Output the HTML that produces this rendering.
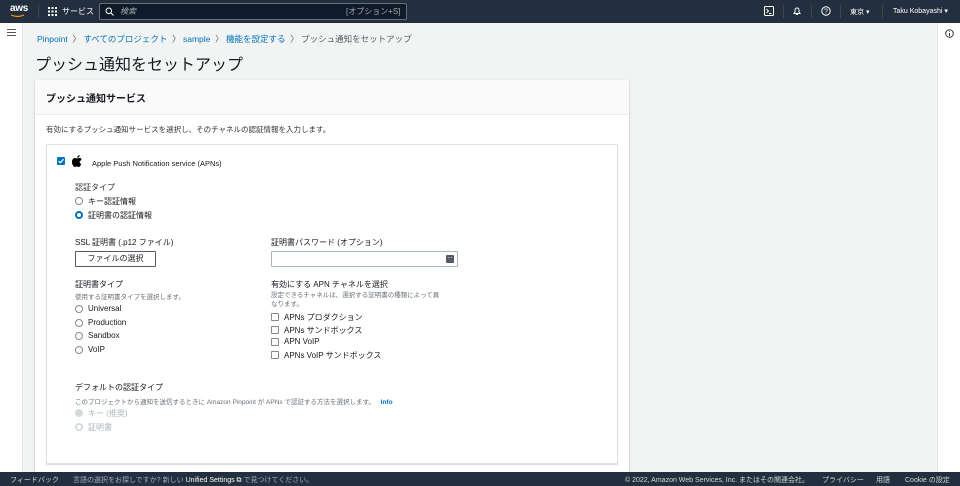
<!DOCTYPE html>
<html><head><meta charset="utf-8"><style>
*{box-sizing:border-box;margin:0;padding:0}
body{width:960px;height:486px;overflow:hidden;background:#f2f3f3;font-family:"Liberation Sans","Noto Sans CJK JP",sans-serif;color:#16191f;position:relative;font-size:8px}
.top{position:absolute;left:0;top:0;width:960px;height:23px;background:#232f3e;color:#fff}
.ab{position:absolute}
.left{position:absolute;left:0;top:23px;width:23px;height:449px;background:#fff;border-right:1px solid #e4e4e4}
.right{position:absolute;right:0;top:23px;width:23px;height:449px;background:#fff;border-left:1px solid #e4e4e4}
.card{position:absolute;left:35px;top:80px;width:594px;height:392px;background:#fff;box-shadow:0 1px 2px rgba(0,0,0,.25)}
.inner{position:absolute;left:46px;top:144px;width:572px;height:320px;border:1px solid #e0e0e0;box-shadow:0 1px 1px rgba(0,0,0,.15)}
.rad{position:absolute;width:8px;height:8px;border:1px solid #888;border-radius:50%;background:#fff}
.cb{position:absolute;width:8px;height:8px;border:1px solid #888;border-radius:1px;background:#fff}
.foot{position:absolute;left:0;top:472px;width:960px;height:14px;background:#232f3e;color:#d5dbdb;font-size:7px}
.lnk{color:#0073bb}
</style></head><body>
<div class="top">
 <div class="ab" style="left:10px;top:3px;font-size:10px;font-weight:bold;letter-spacing:-.3px">aws</div>
 <svg class="ab" style="left:10px;top:14px" width="16" height="4"><path d="M1 1 Q8 4 14 1" stroke="#f90" stroke-width="1.2" fill="none"/></svg>
 <div class="ab" style="left:38px;top:5px;width:1px;height:13px;background:#444"></div>
 <svg class="ab" style="left:48px;top:7px" width="9" height="9" fill="#fff"><rect x="0" y="0" width="2" height="2"/><rect x="3.5" y="0" width="2" height="2"/><rect x="7" y="0" width="2" height="2"/><rect x="0" y="3.5" width="2" height="2"/><rect x="3.5" y="3.5" width="2" height="2"/><rect x="7" y="3.5" width="2" height="2"/><rect x="0" y="7" width="2" height="2"/><rect x="3.5" y="7" width="2" height="2"/><rect x="7" y="7" width="2" height="2"/></svg>
 <div class="ab" style="left:62px;top:6px">サービス</div>
 <div class="ab" style="left:99px;top:3px;width:308px;height:17px;border:1px solid #687078;border-radius:2px;background:#0f1b2a"></div>
 <svg class="ab" style="left:105px;top:7px" width="9" height="9"><circle cx="3.8" cy="3.8" r="2.8" stroke="#fff" fill="none"/><path d="M6 6 L8.5 8.5" stroke="#fff"/></svg>
 <div class="ab" style="left:120px;top:6px;color:#aaa;font-style:italic">検索</div>
 <div class="ab" style="left:346px;top:6px;color:#aaa">[オプション+S]</div>
 <svg class="ab" style="left:764px;top:6px" width="10" height="10"><rect x=".5" y=".5" width="9" height="9" stroke="#fff" fill="none" rx="1"/><path d="M2.5 3 L4.5 5 L2.5 7 M5 7.5 H7.5" stroke="#fff" fill="none"/></svg>
 <div class="ab" style="left:783px;top:5px;width:1px;height:13px;background:#444"></div>
 <svg class="ab" style="left:792px;top:6px" width="10" height="10"><path d="M2 7.5 H8 L7 6 V4 A2 2 0 0 0 3 4 V6 Z M4 8.5 H6" stroke="#fff" fill="none"/></svg>
 <div class="ab" style="left:811px;top:5px;width:1px;height:13px;background:#444"></div>
 <svg class="ab" style="left:821px;top:6px" width="10" height="10"><circle cx="5" cy="5" r="4.2" stroke="#fff" fill="none"/><text x="5" y="7.6" font-size="7" fill="#fff" text-anchor="middle" font-family="Liberation Sans">?</text></svg>
 <div class="ab" style="left:840px;top:5px;width:1px;height:13px;background:#444"></div>
 <div class="ab" style="left:850px;top:7px;font-size:7px">東京 ▾</div>
 <div class="ab" style="left:882px;top:5px;width:1px;height:13px;background:#444"></div>
 <div class="ab" style="left:893px;top:7px;font-size:7px">Taku Kobayashi ▾</div>
</div>
<div class="left"><div class="ab" style="left:7px;top:6px;width:9px;height:7px;border-top:1px solid #555;border-bottom:1px solid #555"><div style="margin-top:2px;height:1px;background:#555"></div></div></div>
<div class="right"><svg class="ab" style="left:7px;top:6px" width="9" height="9"><circle cx="4.5" cy="4.5" r="3.8" stroke="#333" fill="none"/><path d="M4.5 4 V7 M4.5 2.2 V3" stroke="#333"/></svg></div>
<div class="ab" style="left:37px;top:33px;font-size:8.5px;color:#545b64"><span class="lnk">Pinpoint</span> &nbsp;〉 <span class="lnk">すべてのプロジェクト</span> &nbsp;〉 <span class="lnk">sample</span> &nbsp;〉 <span class="lnk">機能を設定する</span> &nbsp;〉 プッシュ通知をセットアップ</div>
<div class="ab" style="left:35px;top:51px;font-size:16px">プッシュ通知をセットアップ</div>
<div class="card">
 <div style="height:35px;background:#fafafa;border-bottom:1px solid #eaeded;padding:10px 11px;font-size:10px;font-weight:bold">プッシュ通知サービス</div>
 <div class="ab" style="left:11px;top:44px;font-size:7.5px;color:#333">有効にするプッシュ通知サービスを選択し、そのチャネルの認証情報を入力します。</div>
</div>
<div class="inner">
 <div class="ab" style="left:10px;top:12px;width:8px;height:8px;background:#0073bb;border-radius:1px"><svg width="8" height="8"><path d="M1.5 4 L3.3 5.8 L6.5 2.2" stroke="#fff" fill="none" stroke-width="1.2"/></svg></div>
 <svg class="ab" style="left:25px;top:9px" width="12" height="14"><path d="M8.4 7.4c0-1.5 1.2-2.2 1.3-2.3-.7-1-1.8-1.2-2.2-1.2-.9-.1-1.8.6-2.3.6s-1.2-.5-2-.5C2 4 .9 4.7.4 5.8c-1 1.8-.3 4.4.7 5.8.5.7 1 1.5 1.8 1.4.7 0 1-.5 1.9-.5s1.1.5 1.9.5 1.3-.7 1.7-1.4c.6-.8.8-1.6.8-1.6s-1.6-.6-1.6-2.6zM7 3c.4-.5.7-1.2.6-1.9-.6 0-1.3.4-1.7.9-.4.4-.7 1.1-.6 1.8.7 0 1.3-.4 1.7-.8z" fill="#000"/></svg>
 <div class="ab" style="left:45px;top:14px;font-size:7.5px">Apple Push Notification service (APNs)</div>
 <div class="ab" style="left:28px;top:37px;font-size:8px;color:#333">認証タイプ</div>
 <div class="rad" style="left:28px;top:52px"></div><div class="ab" style="left:41px;top:51px;font-size:8px">キー認証情報</div>
 <div class="rad" style="left:28px;top:66px;border:2.5px solid #0073bb"></div><div class="ab" style="left:41px;top:65px;font-size:8px">証明書の認証情報</div>
 <div class="ab" style="left:28px;top:92px;font-size:8px">SSL 証明書 (.p12 ファイル)</div>
 <div class="ab" style="left:28px;top:106px;width:81px;height:16px;border:1px solid #545b64;border-radius:1px;font-size:8px;text-align:center;line-height:14px">ファイルの選択</div>
 <div class="ab" style="left:224px;top:92px;font-size:8px">証明書パスワード (オプション)</div>
 <div class="ab" style="left:224px;top:106px;width:187px;height:16px;border:1px solid #aab7b8;border-radius:1px"><div class="ab" style="right:3px;top:3px;width:8px;height:8px;background:#545b64;border-radius:1px;color:#fff;font-size:6px;line-height:5px;text-align:center">...</div></div>
 <div class="ab" style="left:28px;top:134px;font-size:8px">証明書タイプ</div>
 <div class="ab" style="left:28px;top:146px;font-size:6.5px;color:#687078">使用する証明書タイプを選択します。</div>
 <div class="rad" style="left:28px;top:160px"></div><div class="ab" style="left:41px;top:159px;font-size:8px">Universal</div>
 <div class="rad" style="left:28px;top:174px"></div><div class="ab" style="left:41px;top:173px;font-size:8px">Production</div>
 <div class="rad" style="left:28px;top:187px"></div><div class="ab" style="left:41px;top:186px;font-size:8px">Sandbox</div>
 <div class="rad" style="left:28px;top:201px"></div><div class="ab" style="left:41px;top:200px;font-size:8px">VoIP</div>
 <div class="ab" style="left:224px;top:134px;font-size:8px">有効にする APN チャネルを選択</div>
 <div class="ab" style="left:224px;top:146px;width:170px;font-size:6.5px;color:#687078;line-height:9px">設定できるチャネルは、選択する証明書の種類によって異なります。</div>
 <div class="cb" style="left:224px;top:168px"></div><div class="ab" style="left:237px;top:167px;font-size:8px">APNs プロダクション</div>
 <div class="cb" style="left:224px;top:181px"></div><div class="ab" style="left:237px;top:180px;font-size:8px">APNs サンドボックス</div>
 <div class="cb" style="left:224px;top:193px"></div><div class="ab" style="left:237px;top:192px;font-size:8px">APN VoIP</div>
 <div class="cb" style="left:224px;top:206px"></div><div class="ab" style="left:237px;top:205px;font-size:8px">APNs VoIP サンドボックス</div>
 <div class="ab" style="left:28px;top:237px;font-size:8px">デフォルトの認証タイプ</div>
 <div class="ab" style="left:28px;top:251px;font-size:6.5px;color:#687078">このプロジェクトから通知を送信するときに Amazon Pinpoint が APNs で認証する方法を選択します。 <b class="lnk" style="margin-left:4px">Info</b></div>
 <div class="rad" style="left:28px;top:264px;background:#d5dbdb;border-color:#d5dbdb"></div><div class="ab" style="left:41px;top:263px;font-size:8px;color:#aab7b8">キー (推奨)</div>
 <div class="rad" style="left:28px;top:278px;border:2.5px solid #d5dbdb"></div><div class="ab" style="left:41px;top:277px;font-size:8px;color:#aab7b8">証明書</div>
</div>
<div class="foot">
 <div class="ab" style="left:10px;top:3px">フィードバック</div>
 <div class="ab" style="left:73px;top:3px;color:#aab">言語の選択をお探しですか? 新しい <span style="color:#fff">Unified Settings ⧉</span> で見つけてください。</div>
 <div class="ab" style="left:625px;top:3px">© 2022, Amazon Web Services, Inc. またはその関連会社。</div>
 <div class="ab" style="left:822px;top:3px">プライバシー</div>
 <div class="ab" style="left:876px;top:3px">用語</div>
 <div class="ab" style="left:905px;top:3px">Cookie の設定</div>
</div>
</body></html>
